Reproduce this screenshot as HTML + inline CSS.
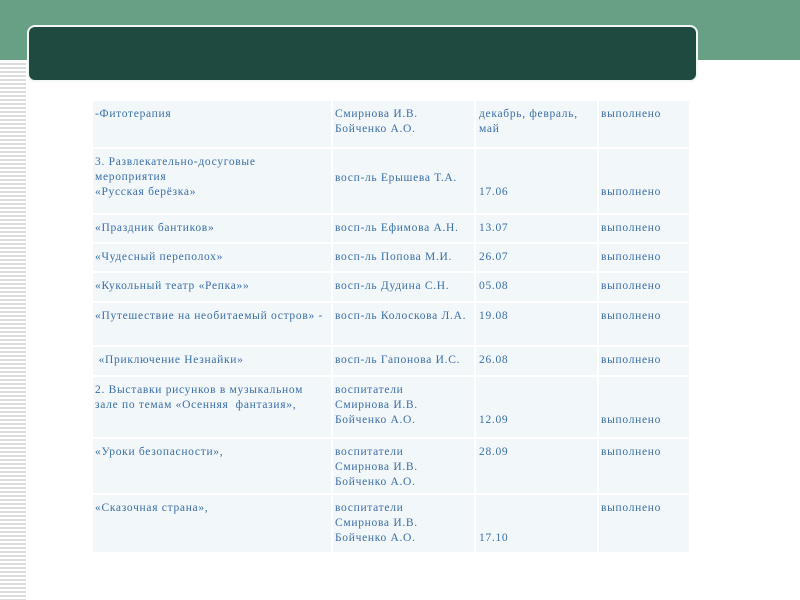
<!DOCTYPE html>
<html><head><meta charset="utf-8"><style>
body{margin:0;width:800px;height:600px;position:relative;overflow:hidden;background:#fff;font-family:"Liberation Serif",serif;}
.band{position:absolute;left:0;top:0;width:800px;height:60px;background:#68a086;}
.stripes{position:absolute;left:0;top:61px;width:26px;height:539px;background:repeating-linear-gradient(#fff 0 2px,#dcdcdc 2px 4px);}
.dark{position:absolute;left:27px;top:25px;width:671px;height:57px;background:#1f4a40;border:2px solid #f2f6f4;border-radius:8px;box-sizing:border-box;}
.c{position:absolute;background:#f2f7fa;}
.t{position:absolute;font-size:11.5px;letter-spacing:0.7px;line-height:15px;color:#3a6ea5;white-space:nowrap;}
</style></head><body>
<div class="band"></div><div class="stripes"></div><div class="dark"></div>
<div id="tb"></div>
<script>
var cols=[92,332,475,598,690],rows=[100,148,214,243,272,302,346,376,438,494,553];
var h='';
for(var r=0;r<rows.length-1;r++)for(var c=0;c<4;c++){h+='<div class="c" style="left:'+(cols[c]+1)+'px;top:'+(rows[r]+1)+'px;width:'+(cols[c+1]-cols[c]-2)+'px;height:'+(rows[r+1]-rows[r]-2)+'px"></div>';}
var T=[
[95,107,'-Фитотерапия'],[335,107,'Смирнова И.В.<br>Бойченко А.О.'],[479,107,'декабрь, февраль,<br>май'],[601,107,'выполнено'],
[95,155,'3. Развлекательно-досуговые<br>мероприятия<br>«Русская берёзка»'],[335,171,'восп-ль Ерышева Т.А.'],[479,185,'17.06'],[601,185,'выполнено'],
[95,221,'«Праздник бантиков»'],[335,221,'восп-ль Ефимова А.Н.'],[479,221,'13.07'],[601,221,'выполнено'],
[95,250,'«Чудесный переполох»'],[335,250,'восп-ль Попова М.И.'],[479,250,'26.07'],[601,250,'выполнено'],
[95,279,'«Кукольный театр «Репка»»'],[335,279,'восп-ль Дудина С.Н.'],[479,279,'05.08'],[601,279,'выполнено'],
[95,309,'«Путешествие на необитаемый остров» -'],[335,309,'восп-ль Колоскова Л.А.'],[479,309,'19.08'],[601,309,'выполнено'],
[95,353,'&nbsp;«Приключение Незнайки»'],[335,353,'восп-ль Гапонова И.С.'],[479,353,'26.08'],[601,353,'выполнено'],
[95,383,'2. Выставки рисунков в музыкальном<br>зале по темам «Осенняя&nbsp; фантазия»,'],[335,383,'воспитатели<br>Смирнова И.В.<br>Бойченко А.О.'],[479,413,'12.09'],[601,413,'выполнено'],
[95,445,'«Уроки безопасности»,'],[335,445,'воспитатели<br>Смирнова И.В.<br>Бойченко А.О.'],[479,445,'28.09'],[601,445,'выполнено'],
[95,501,'«Сказочная страна»,'],[335,501,'воспитатели<br>Смирнова И.В.<br>Бойченко А.О.'],[479,531,'17.10'],[601,501,'выполнено']];
T.forEach(function(a){h+='<div class="t" style="left:'+a[0]+'px;top:'+a[1]+'px">'+a[2]+'</div>';});
document.getElementById('tb').innerHTML=h;
</script>
</body></html>
